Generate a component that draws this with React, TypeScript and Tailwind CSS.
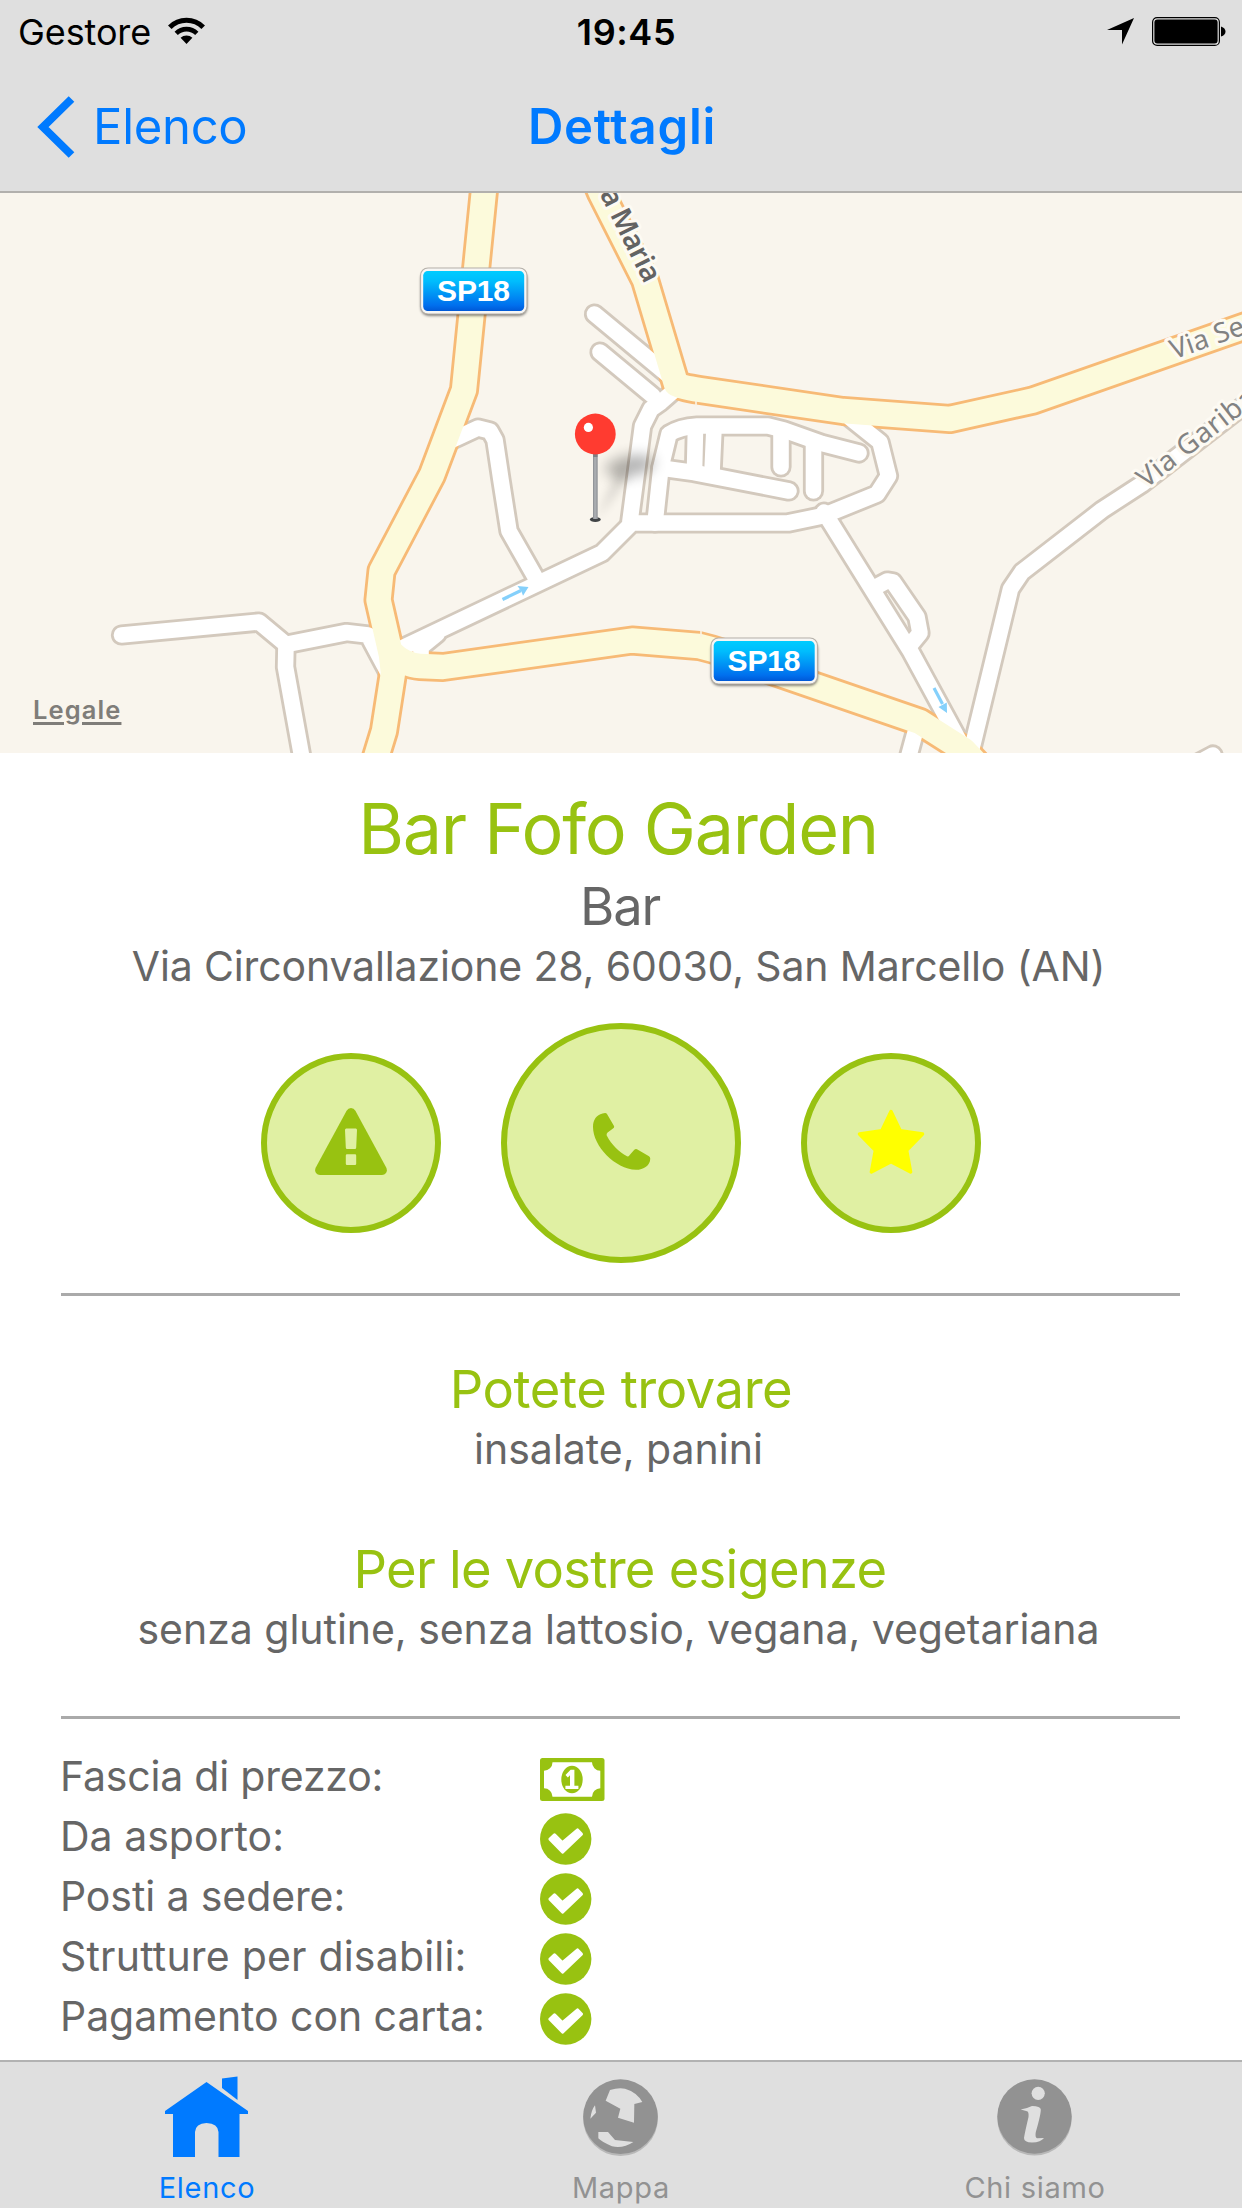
import type { ReactNode } from "react";

const mainRoads = [
  "M485 180 L464 390 L432 475 L381.5 571 L378.5 600 L391 655 L393 673 L384 731 L369 780",
  "M391 652 Q404 665 420 666 L443 667 L632 640.5 L699 646 Q725 652 760 667 L920 722 L964 750 L992 780",
  "M592 172 L601 193 L645 280 L676 384 Q680 387 700 390 L843 411 L950 419 L1033 400.5 L1260 321",
];

const streets = [
  "M121.5 635 L259 622 L286 644.5 L346.5 632.5 L368 635 L392 680",
  "M286 644 L285.5 667 L306 780",
  "M404 647 L602 553 L632 523 L788 523 L824 515.5 L877 494 L888.5 476 L880 442 L850 418",
  "M437 634 L421 647 L421 664",
  "M824 512 L911 652 L974 768",
  "M874 588 L887 581 L893 582 L917 617 L920 633 L911 644",
  "M971 752 L1010.5 589 L1022 572 L1102 510 L1142 484 L1260 393",
  "M918 722 L905 770",
  "M1170 778 L1213 755",
  "M448 442 L478 428 L490 431 L495 440 L501 480 L509 531 L538 582",
  "M594.5 314 L668 375",
  "M600 352 L653 396",
  "M677 388 L661 402 L651 409 L642.5 426 L630 521",
  "M655 523 L661 467 L669 434 Q680 427 697 426 L768 426 L784 430 L822 443.5 L859 453",
  "M695.5 428 L694.5 470",
  "M714 428 L712 472",
  "M661 468 L694 472.5 L789 491",
  "M781 431 L781 467",
  "M813.5 443 L813.5 491",
];

function RoadShield({ x, y }: { x: number; y: number }) {
  return (
    <g transform={`translate(${x} ${y})`}>
      <rect x="1" y="3" width="106" height="45" rx="8" fill="#000" opacity="0.6" filter="url(#soft)" />
      <rect x="0.5" y="0.5" width="106.5" height="46" rx="7.5" fill="#f7f6f4" stroke="#b5b0a9" strokeWidth="1.2" />
      <rect x="3.2" y="3.6" width="101" height="40" rx="4.5" fill="url(#shield)" />
      <text x="53.5" y="33.5" textAnchor="middle" fill="#fff" fontSize="30" fontWeight="700" fontFamily="Liberation Sans, sans-serif" textLength="73">SP18</text>
    </g>
  );
}

function Pin() {
  return (
    <g>
      <ellipse cx="630" cy="466" rx="25" ry="10" transform="rotate(-10 630 466)" fill="#000" opacity="0.3" filter="url(#blur)" />
      <path d="M597 519 L618 470 L630 475 Z" fill="#000" opacity="0.13" filter="url(#blurSmall)" />
      <ellipse cx="595.3" cy="519.5" rx="5.4" ry="2.4" fill="#404345" />
      <rect x="593.1" y="452" width="4.4" height="67" fill="#a9acb0" />
      <rect x="593.1" y="452" width="1" height="67" fill="#8f9296" />
      <rect x="596.5" y="452" width="1" height="67" fill="#8f9296" />
      <rect x="593.1" y="453" width="4.4" height="4" fill="#7d8084" />
      <circle cx="595.3" cy="434" r="20.4" fill="#ff3b30" />
      <circle cx="588.4" cy="427.4" r="4.6" fill="#fff" />
    </g>
  );
}

function MapDrawing() {
  return (
    <svg viewBox="0 193 1242 560" className="block h-[560px] w-[1242px]">
      <defs>
        <linearGradient id="shield" x1="0" y1="0" x2="0" y2="1">
          <stop offset="0" stopColor="#00ccff" />
          <stop offset="0.25" stopColor="#00bdfd" />
          <stop offset="0.85" stopColor="#0070ee" />
          <stop offset="1" stopColor="#0058d6" />
        </linearGradient>
        <filter id="soft" x="-20%" y="-20%" width="140%" height="150%"><feGaussianBlur stdDeviation="1.8" /></filter>
        <filter id="blur" x="-60%" y="-100%" width="220%" height="300%"><feGaussianBlur stdDeviation="7" /></filter>
        <filter id="blurSmall" x="-60%" y="-60%" width="220%" height="220%"><feGaussianBlur stdDeviation="5" /></filter>
      </defs>
      <g fill="none" strokeLinejoin="round" strokeLinecap="round">
        {streets.map((d) => <path key={d} d={d} stroke="#d3c9bd" strokeWidth="21.2" />)}
        {mainRoads.map((d) => <path key={d} d={d} stroke="#f7ba76" strokeWidth="30" />)}
        {streets.map((d) => <path key={d} d={d} stroke="#fff" strokeWidth="15.6" />)}
        {mainRoads.map((d) => <path key={d} d={d} stroke="#fcfadb" strokeWidth="24.4" />)}
        <path d="M701 630.5 V637 M696 401 V406" stroke="#fbf3e4" strokeWidth="1.6" strokeLinecap="butt" />
      </g>
      <g fill="none" stroke="#85d0fb" strokeWidth="3.2">
        <path d="M502.5 599.5 L521 590.5" />
        <path d="M934 688 L942.5 704" />
      </g>
      <path d="M517.5 586 L528.5 587 L523 595.8 L521.5 591.5 Z M938.5 707 L946.8 702.5 L947 713 Z" fill="#85d0fb" />
      <g fontFamily="Noto Sans, sans-serif" strokeLinejoin="round" style={{ paintOrder: "stroke" }} stroke="#fdfaf3" strokeWidth="6">
        <text transform="translate(595.5 186) rotate(63.5)" fontSize="28.5" fontWeight="600" fill="#636363" textLength="101" lengthAdjust="spacing" x="9">a Maria</text>
        <text transform="translate(1174 359.5) rotate(-19.5)" fontSize="27.5" fill="#828282">Via Se</text>
        <text transform="translate(1146 489) rotate(-38)" fontSize="28" fill="#828282" letterSpacing="0.8">Via Gariba</text>
      </g>
      <RoadShield x={420} y={267.5} />
      <RoadShield x={710.5} y={637.5} />
      <Pin />
    </svg>
  );
}

function StatusBar() {
  return (
    <div className="grid h-[60px] grid-cols-3 items-center">
      <div className="flex items-center pl-[18px]">
        <span className="pt-[2px] text-[36px] leading-[60px] tracking-[-0.1px]">Gestore</span>
        <svg viewBox="0 0 37 28" className="-mt-[1px] ml-[17px] h-[28px] w-[37px]">
          <path d="M1.8 10.2 A23.5 23.5 0 0 1 35.2 10.2" fill="none" stroke="#000" strokeWidth="5" />
          <path d="M8.2 16.4 A14.6 14.6 0 0 1 28.8 16.4" fill="none" stroke="#000" strokeWidth="4.6" />
          <path d="M12.6 20.8 A8.6 8.6 0 0 1 24.4 20.8 L18.5 27 Z" />
        </svg>
      </div>
      <span className="pt-[1px] pl-[11px] text-center text-[36px] leading-[60px] font-semibold tracking-[0.6px]">19:45</span>
      <div className="flex items-center justify-end pr-[16px]">
        <svg viewBox="0 0 27 27" className="mr-[18px] h-[27px] w-[27px]"><path d="M27 0 L15 26.5 V12 H0 Z" /></svg>
        <svg viewBox="0 0 74 29" className="h-[29px] w-[74px]">
          <rect x="0.6" y="0.6" width="66.8" height="27.8" rx="4.5" fill="none" stroke="#000" strokeWidth="1.2" />
          <rect x="2.4" y="2.4" width="63.2" height="24.2" rx="3" />
          <path d="M69 9.5 Q73.5 11 73.5 14.5 T69 19.5 Z" />
        </svg>
      </div>
    </div>
  );
}

function NavBar() {
  return (
    <div className="grid h-[132px] grid-cols-3 items-center pt-[1px] text-[49px] text-[#007aff]">
      <div className="flex items-center pl-[36px]">
        <svg viewBox="0 0 39 62" className="h-[62px] w-[39px]">
          <path d="M35.5 3 L7 31 L35.5 59" fill="none" stroke="#007aff" strokeWidth="8" />
        </svg>
        <span className="ml-[18px] tracking-[-0.3px]">Elenco</span>
      </div>
      <span className="pl-[2px] text-center font-semibold tracking-[0.75px]">Dettagli</span>
    </div>
  );
}

function RoundButton({ large, children }: { large?: boolean; children: ReactNode }) {
  return (
    <button
      className={
        large
          ? "flex h-[240px] w-[240px] items-center justify-center rounded-full border-[6px] border-[#98c211] bg-[#e0f0a3]"
          : "flex h-[180px] w-[180px] items-center justify-center rounded-full border-[6px] border-[#98c211] bg-[#e0f0a3]"
      }
    >
      {children}
    </button>
  );
}

function WarningIcon() {
  return (
    <svg viewBox="0 0 72 67" className="-mt-[3px] h-[67px] w-[72px]" fill="#98c211">
      <path d="M36 0 Q38.8 0 40.4 2.8 L71.2 59.5 Q72.6 62.5 71 65 Q69.5 67 67 67 H5 Q2.5 67 1 65 Q-0.6 62.5 0.8 59.5 L31.6 2.8 Q33.2 0 36 0 Z" />
      <path d="M31.2 20.5 H40.8 Q42 20.5 42 22 L41.2 39.5 Q41.1 41 40 41 H32 Q30.9 41 30.8 39.5 L30 22 Q30 20.5 31.2 20.5 Z M32 46.3 H40 Q41.2 46.3 41.2 47.5 V55.8 Q41.2 57 40 57 H32 Q30.8 57 30.8 55.8 V47.5 Q30.8 46.3 32 46.3 Z" fill="#e0f0a3" />
    </svg>
  );
}

function PhoneIcon() {
  return (
    <svg viewBox="0 0 58 57" className="-mt-[3px] ml-[1px] h-[57px] w-[58px]" fill="#98c211">
      <path d="M9.5 0.6 Q13 -0.6 14 1 L21 13 Q21.6 14.4 20 15.6 L14.6 19.6 Q13 21.2 14 23 C18.5 31.5 26 39 34 43.3 Q35.5 43.8 36.5 42.2 L41.3 36.8 Q42.7 35.5 44 36.3 L56 43.2 Q57.3 44 57.2 45.5 C57.5 52 51 56.8 43 56.8 C22 56 0 33 0 14 C0 7 3.5 2 9.5 0.6 Z" />
    </svg>
  );
}

function StarIcon() {
  return (
    <svg viewBox="0 0 68 66" className="-mt-[2px] h-[66px] w-[68px]" fill="#ff0" stroke="#ff0" strokeWidth="3.5" strokeLinejoin="round">
      <path d="M34 2.5 L43.2 21.8 L65.5 25 L49.6 41.3 L53.6 63 L34 52.7 L14.4 63 L18.4 41.3 L2.5 25 L24.8 21.8 Z" />
    </svg>
  );
}

function BanknoteIcon() {
  return (
    <svg viewBox="0 0 65 44" className="h-[44px] w-[65px]">
      <rect x="0" y="0" width="64.5" height="43" rx="2.5" fill="#98c211" />
      <path d="M12.5 4.3 H52 A8.5 8.5 0 0 0 60.3 12.8 V30.2 A8.5 8.5 0 0 0 52 38.7 H12.5 A8.5 8.5 0 0 0 4 30.2 V12.8 A8.5 8.5 0 0 0 12.5 4.3 Z" fill="#fff" />
      <ellipse cx="32" cy="21.5" rx="10.7" ry="13.8" fill="#98c211" />
      <path d="M25.5 17 L30.6 11.8 H34.4 V27.7 H38.4 V31 H25.4 V27.7 H30 V17.2 L27.8 19.4 Z" fill="#fff" />
    </svg>
  );
}

function CheckIcon() {
  return (
    <svg viewBox="0 0 52 52" className="h-[52px] w-[52px]">
      <circle cx="25.7" cy="26" r="25.7" fill="#98c211" />
      <path d="M22.5 39 L10 26.2 L14.5 22 L22.5 29.8 L37.6 17 L41.4 21 Z" fill="#fff" stroke="#fff" strokeWidth="3.2" strokeLinejoin="round" />
    </svg>
  );
}

function HouseIcon() {
  return (
    <svg viewBox="165 2077 83 82" className="mr-[2px] h-[82px] w-[83px]" fill="#007aff">
      <path d="M206.5 2083 L248 2112 V2115 H239.5 V2158 H218.5 V2133 Q218 2124.5 206.5 2124 Q195.5 2124.5 195 2133 V2158 H173 V2115 H165 V2112 Z" />
      <path d="M222 2079.5 L237.5 2077.5 V2101 L222 2089 Z" />
    </svg>
  );
}

function GlobeIcon() {
  return (
    <svg viewBox="36 54 231 240" className="mr-[2px] h-[80px] w-[77px]">
      <circle cx="151.5" cy="176" r="112" fill="#929292" opacity="0.5" />
      <circle cx="151.5" cy="170" r="112" fill="#929292" />
      <path d="M120 90 Q145 82 165 86 Q200 96 217 126 L193 132 L192 188 L144 173 L151 146 L107 122 Z M85 216 H114 L135 240 L190 246 Q160 266 126 259 Q98 248 85 235 Z M75 136 L78 158 L61 176 Q64 150 75 136 Z" fill="#dfdfdf" />
    </svg>
  );
}

function InfoIcon() {
  return (
    <svg viewBox="996 2078 77 80" className="mr-[2px] h-[80px] w-[77px]">
      <circle cx="1034.5" cy="2118.4" r="37.2" fill="#929292" opacity="0.5" />
      <circle cx="1034.5" cy="2116.5" r="37.2" fill="#929292" />
      <circle cx="1038.2" cy="2093.3" r="6.6" fill="#dfdfdf" />
      <path d="M1020.7 2109.5 Q1027 2108.5 1032 2106 Q1040.5 2106 1040.8 2109.5 Q1041 2114 1035.8 2132 Q1034.8 2137.5 1037 2138.3 L1044 2138 Q1041 2142.2 1032 2142.6 Q1024 2142.4 1024 2138 Q1024.5 2134 1028.5 2117 Q1029 2112 1027 2111.3 Z" fill="#dfdfdf" />
    </svg>
  );
}

function Heading({ children, className }: { children: ReactNode; className: string }) {
  return <h2 className={`text-center text-[52.5px] leading-[70px] text-[#98c211] ${className}`}>{children}</h2>;
}

const facts = [
  { label: "Fascia di prezzo:", tracking: "tracking-[-0.2px]", icon: <BanknoteIcon />, pad: "pt-[12px]" },
  { label: "Da asporto:", tracking: "tracking-[0px]", icon: <CheckIcon />, pad: "pt-[7px]" },
  { label: "Posti a sedere:", tracking: "tracking-[-0.1px]", icon: <CheckIcon />, pad: "pt-[7px]" },
  { label: "Strutture per disabili:", tracking: "tracking-[0.2px]", icon: <CheckIcon />, pad: "pt-[7px]" },
  { label: "Pagamento con carta:", tracking: "tracking-[-0.05px]", icon: <CheckIcon />, pad: "pt-[7px]" },
];

const tabs = [
  { label: "Elenco", color: "text-[#007aff]", icon: <HouseIcon /> },
  { label: "Mappa", color: "text-[#929292]", icon: <GlobeIcon /> },
  { label: "Chi siamo", color: "text-[#929292]", icon: <InfoIcon /> },
];

export default function App() {
  return (
    <div className="flex h-[2208px] w-[1242px] flex-col overflow-hidden bg-white font-[Inter,sans-serif] text-[#666]">
      <header className="h-[193px] border-b-2 border-[#b2b0ad] bg-[#dfdfdf] text-black">
        <StatusBar />
        <NavBar />
      </header>

      <section className="relative h-[560px] bg-[#f9f5ed]">
        <MapDrawing />
        <a className="absolute bottom-[26px] left-[33px] text-[25.5px] leading-[34px] font-semibold tracking-[1.1px] text-[#7f7d79] underline decoration-[2.5px] underline-offset-[3px]">
          Legale
        </a>
      </section>

      <main className="flex-1 px-[61px] pt-[33px]">
        <h1 className="pr-[6px] text-center text-[70px] leading-[85px] tracking-[-1.3px] text-[#98c211]">Bar Fofo Garden</h1>
        <p className="pr-[2px] text-center text-[52.5px] leading-[70px] tracking-[-1.2px]">Bar</p>
        <p className="pr-[5px] text-center text-[41px] leading-[50px] tracking-[-0.14px] whitespace-nowrap">
          Via Circonvallazione 28, 60030, San Marcello (AN)
        </p>
        <div className="mt-[32px] flex items-center justify-center gap-[60px]">
          <RoundButton><WarningIcon /></RoundButton>
          <RoundButton large><PhoneIcon /></RoundButton>
          <RoundButton><StarIcon /></RoundButton>
        </div>
        <hr className="mt-[30px] mr-[1px] border-t-[3px] border-[#aaa]" />

        <Heading className="mt-[58px] tracking-[-0.45px]">Potete trovare</Heading>
        <p className="pr-[5px] text-center text-[41px] leading-[50px]">insalate, panini</p>
        <Heading className="mt-[60px] pr-[2px] tracking-[-0.75px]">Per le vostre esigenze</Heading>
        <p className="pr-[5px] text-center text-[41px] leading-[50px] tracking-[-0.03px]">senza glutine, senza lattosio, vegana, vegetariana</p>
        <hr className="mt-[62px] mr-[1px] border-t-[3px] border-[#aaa]" />

        <dl className="mt-[27px]">
          {facts.map((f) => (
            <div key={f.label} className="grid h-[60px] grid-cols-[479px_1fr]">
              <dt className={`-ml-[1px] text-[41px] leading-[60px] ${f.tracking}`}>{f.label}</dt>
              <dd className={f.pad}>{f.icon}</dd>
            </div>
          ))}
        </dl>
      </main>

      <nav className="grid h-[148px] shrink-0 grid-cols-3 border-t-2 border-[#b2b2b2] bg-[#dfdfdf]">
        {tabs.map((t) => (
          <div key={t.label} className={`flex flex-col items-center ${t.color}`}>
            <div className="flex h-[96px] items-end">{t.icon}</div>
            <span className="mt-[11px] text-[29px] leading-[38px] tracking-[0.7px]">{t.label}</span>
          </div>
        ))}
      </nav>
    </div>
  );
}
